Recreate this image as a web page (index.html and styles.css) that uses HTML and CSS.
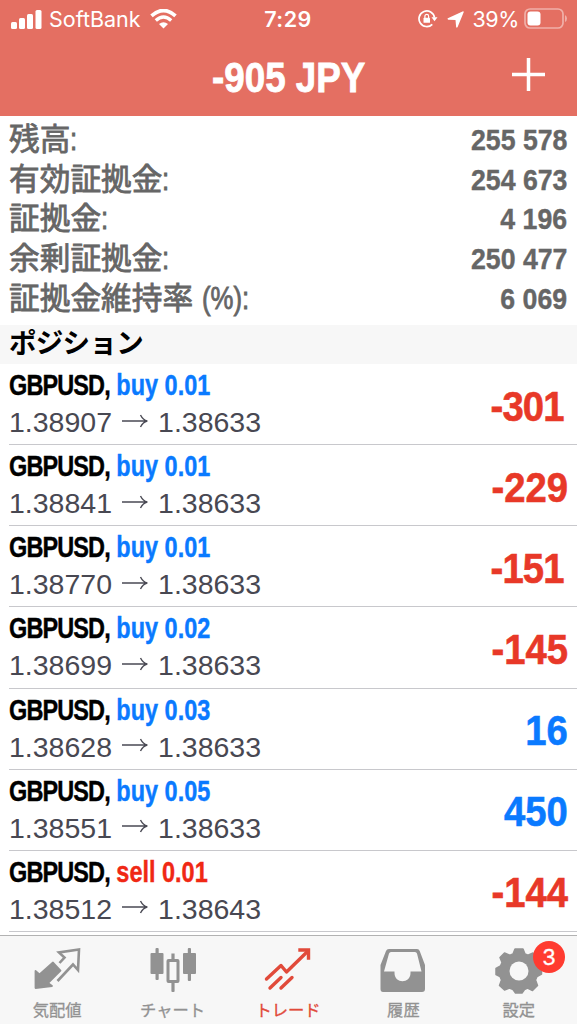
FILE: index.html
```html
<!DOCTYPE html>
<html lang="ja">
<head>
    <meta charset="utf-8">
    <meta name="viewport" content="width=device-width, initial-scale=1.0">
    <title>トレード</title>
    <link rel="stylesheet" href="styles.css">
</head>
<body>
    <header>
        <div class="status-bar">
            <div class="status-left">
                <svg class="signal" width="31" height="19" viewBox="0 0 31 19" fill="#fff">
                    <rect x="0" y="12" width="6" height="7" rx="1.5"/>
                    <rect x="8" y="8" width="6" height="11" rx="1.5"/>
                    <rect x="16" y="4" width="6" height="15" rx="1.5"/>
                    <rect x="24.5" y="0" width="6" height="19" rx="1.5"/>
                </svg>
                <span class="carrier">SoftBank</span>
                <svg class="wifi" width="27" height="20" viewBox="0 0 27 20">
                    <path d="M1.5 6.8Q13.5-3.8 25.5 6.8" fill="none" stroke="#fff" stroke-width="3.7"/>
                    <path d="M5.8 11.4Q13.5 4.6 21.2 11.4" fill="none" stroke="#fff" stroke-width="3.4"/>
                    <path d="M9 15Q13.5 11.3 18 15L13.5 19.5Z" fill="#fff"/>
                </svg>
            </div>
            <span class="clock">7:29</span>
            <div class="status-right">
                <svg width="20" height="18" viewBox="0 0 20 18">
                    <path d="M14.3 14.3A7.8 7.8 0 1 1 16.5 7.5" fill="none" stroke="#fff" stroke-width="1.7"/>
                    <path d="M13.5 7.3H19.5L16.5 11.3Z" fill="#fff"/>
                    <rect x="5.5" y="7.8" width="6.5" height="5" rx=".6" fill="#fff"/>
                    <path d="M6.9 8V6.3a1.85 1.85 0 0 1 3.7 0V8" fill="none" stroke="#fff" stroke-width="1.2"/>
                </svg>
                <svg class="location" width="17" height="17" viewBox="0 0 16 16" fill="#fff">
                    <path d="M14.600 .4Q16 0 15.700 1.200L10 15Q9.200 16.500 8.600 15L8 8.500L1.200 8.200Q0 7.600 .8 6.800Z"/>
                </svg>
                <span class="percent">39%</span>
                <svg class="battery" width="44" height="22" viewBox="0 0 44 22">
                    <rect x="1" y="1" width="38" height="19" rx="5" fill="none" stroke="#fff" stroke-opacity=".45" stroke-width="1.7"/>
                    <rect x="3.5" y="3.5" width="13" height="14" rx="3" fill="#fff"/>
                    <path d="M41 7Q43 8 43 10.5T41 14Z" fill="#fff" fill-opacity=".45"/>
                </svg>
            </div>
        </div>
        <div class="title-bar">
            <h1>-905 JPY</h1>
            <svg class="add" width="33" height="33" viewBox="0 0 33 33">
                <path d="M16.5 0V33M0 16.5H33" stroke="#fff" stroke-width="3.5"/>
            </svg>
        </div>
    </header>

    <dl class="summary">
        <div><dt>残高<span>:</span></dt><dd>255 578</dd></div>
        <div><dt>有効証拠金<span>:</span></dt><dd>254 673</dd></div>
        <div><dt>証拠金<span>:</span></dt><dd>4 196</dd></div>
        <div><dt>余剰証拠金<span>:</span></dt><dd>250 477</dd></div>
        <div><dt>証拠金維持率 <span>(%):</span></dt><dd>6 069</dd></div>
    </dl>

    <h2>ポジション</h2>

    <!-- one arrow, reused in every row -->
    <svg class="defs">
        <symbol id="arrow" viewBox="0 0 26 14">
            <path d="M0 7H25M18.5 1Q21 6 25.3 7Q21 8 18.5 13" fill="none" stroke="#4a4a54" stroke-width="1.4"/>
        </symbol>
    </svg>

    <ul class="positions">
        <li>
            <div>
                <p class="symbol"><span>GBPUSD,</span> <b class="buy">buy 0.01</b></p>
                <p class="price">1.38907<svg><use href="#arrow"/></svg>1.38633</p>
            </div>
            <span class="profit loss one">-301</span>
        </li>
        <li>
            <div>
                <p class="symbol"><span>GBPUSD,</span> <b class="buy">buy 0.01</b></p>
                <p class="price">1.38841<svg><use href="#arrow"/></svg>1.38633</p>
            </div>
            <span class="profit loss">-229</span>
        </li>
        <li>
            <div>
                <p class="symbol"><span>GBPUSD,</span> <b class="buy">buy 0.01</b></p>
                <p class="price">1.38770<svg><use href="#arrow"/></svg>1.38633</p>
            </div>
            <span class="profit loss one">-151</span>
        </li>
        <li>
            <div>
                <p class="symbol"><span>GBPUSD,</span> <b class="buy">buy 0.02</b></p>
                <p class="price">1.38699<svg><use href="#arrow"/></svg>1.38633</p>
            </div>
            <span class="profit loss">-145</span>
        </li>
        <li>
            <div>
                <p class="symbol"><span>GBPUSD,</span> <b class="buy">buy 0.03</b></p>
                <p class="price">1.38628<svg><use href="#arrow"/></svg>1.38633</p>
            </div>
            <span class="profit gain">16</span>
        </li>
        <li>
            <div>
                <p class="symbol"><span>GBPUSD,</span> <b class="buy">buy 0.05</b></p>
                <p class="price">1.38551<svg><use href="#arrow"/></svg>1.38633</p>
            </div>
            <span class="profit gain">450</span>
        </li>
        <li>
            <div>
                <p class="symbol"><span>GBPUSD,</span> <b class="sell">sell 0.01</b></p>
                <p class="price">1.38512<svg><use href="#arrow"/></svg>1.38643</p>
            </div>
            <span class="profit loss">-144</span>
        </li>
    </ul>

    <nav>
        <a>
            <svg width="48" height="48" viewBox="0 0 48 48">
                <path d="M20 14.500L27.500 22.500L15 35L19 38L2.500 40V23L6.500 26.500Z" fill="#929292" stroke="#929292" stroke-width="1.800" stroke-linejoin="round"/>
                <path d="M26.500 15L31.500 9.500L26 4.500L46 1.500L45 22L40 16.500L24.500 33" fill="none" stroke="#929292" stroke-width="2.600"/>
            </svg>
            <span>気配値</span>
        </a>
        <a>
            <svg width="48" height="48" viewBox="0 0 48 48" fill="#929292">
                <rect x="1.5" y="5" width="13" height="21" rx="1"/>
                <rect x="6.5" y="0" width="3.2" height="32" rx="1"/>
                <rect x="34" y="5" width="13" height="21" rx="1"/>
                <rect x="38.8" y="0" width="3.2" height="33" rx="1"/>
                <rect x="19" y="12.5" width="10" height="21" rx=".5" fill="none" stroke="#929292" stroke-width="3"/>
                <rect x="22.4" y="5.5" width="3.2" height="7"/>
                <rect x="22.4" y="34" width="3.2" height="10" rx="1"/>
            </svg>
            <span>チャート</span>
        </a>
        <a class="active">
            <svg width="48" height="48" viewBox="0 0 48 48" fill="none" stroke="#e14a3a" stroke-width="3.4">
                <path d="M2.5 31L17 17.5L22.5 24L44 3" stroke-linejoin="round" stroke-linecap="round"/>
                <path d="M36 2H44.5V10" stroke-linecap="square"/>
                <path d="M6 40L17 29.5M17 40L28 29.5" stroke-linecap="round"/>
            </svg>
            <span>トレード</span>
        </a>
        <a>
            <svg width="48" height="48" viewBox="0 0 48 48">
                <path d="M10 1H38Q40 1 40.7 3L46 17V41Q46 44 43 44H4Q1.5 44 1.5 41V17L7 3Q7.7 1 10 1ZM12 4Q10.5 4 10 5.5L5 23.5H15.5V25C15.5 36 31.5 36 31.5 25V23.5H42.5L38 5.5Q37.5 4 36 4Z" fill="#929292" fill-rule="evenodd"/>
            </svg>
            <span>履歴</span>
        </a>
        <a>
            <svg width="48" height="48" viewBox="0 0 48 48">
                <path d="M20 1H28L30 6L33 7.3L38 5L43 9.5L40.5 15L42 18.5L46.5 20V26L42 28.5L40.5 32L42.5 37.5L37.5 42.5L32.5 40L29.5 41.5L27 45H20.5L18 41.5L14.5 40L9.5 42L4.5 37.5L6.5 32L5 28.5L1 26.5V20.5L5.5 18L7 14.5L5 9.5L9.5 5L15 7.3L18 6Z" fill="#929292" stroke="#929292" stroke-width="1.5" stroke-linejoin="round"/>
                <circle cx="24" cy="23" r="9.5" fill="#f7f7f7"/>
            </svg>
            <span>設定</span>
            <b class="badge">3</b>
        </a>
    </nav>
</body>
</html>
```
FILE: styles.css
```css
/* Page setup */
* {
    box-sizing: border-box;
}

body {
    margin: 0;
    height: 1024px;
    overflow: hidden;
    background: #fff;
    color: #000;
    font-family: "Liberation Sans", "Noto Sans CJK JP", sans-serif;
    display: flex;
    flex-direction: column;
}

svg {
    display: block;
    flex: none;
}

.defs {
    position: absolute;
    width: 0;
    height: 0;
}

/* Red header */
header {
    height: 116px;
    flex: none;
    background: #e46f62;
    color: #fff;
}

.status-bar {
    height: 38px;
    display: grid;
    grid-template-columns: 1fr auto 1fr;
    align-items: center;
    padding: 0 9px 0 11px;
    font-family: Inter, sans-serif;
    font-size: 21.5px;
}

.status-left,
.status-right {
    display: flex;
    align-items: center;
}

.status-right {
    justify-content: flex-end;
}

.signal {
    margin-right: 7px;
}

.wifi {
    margin-left: 9px;
}

.clock {
    font-weight: 600;
    letter-spacing: 0.5px;
    margin-right: 3px;
}

.location {
    margin-left: 9px;
}

.percent {
    margin: 0 5px 0 8px;
    letter-spacing: -0.4px;
}

.title-bar {
    height: 78px;
    display: grid;
    grid-template-columns: 1fr auto 1fr;
    align-items: center;
}

/* Bold text is squeezed to a condensed look */
h1 {
    grid-column: 2;
    margin: 0;
    font-size: 43px;
    line-height: 77px;
    transform: scaleX(0.855);
    -webkit-text-stroke: 0.8px;
}

.add {
    justify-self: end;
    margin: 0 32px 6px 0;
}

/* Account summary */
.summary {
    margin: 0;
    padding: 4px 10px 0 9px;
    height: 209px;
    flex: none;
    color: #666;
}

.summary div {
    display: flex;
    justify-content: space-between;
    height: 39.7px;
    line-height: 39.7px;
}

dt {
    font-size: 30.7px;
    white-space: nowrap;
    -webkit-text-stroke: 0.8px #666;
}

dt span {
    display: inline-block;
    transform: scaleX(0.84);
    transform-origin: left;
}

dd {
    margin: 0;
    font-size: 30px;
    font-weight: bold;
    transform: scaleX(0.89);
    transform-origin: right;
    -webkit-text-stroke: 0.4px;
}

h2 {
    margin: 0;
    height: 39px;
    flex: none;
    padding-left: 9px;
    background: #f7f7f7;
    font: bold 27.5px/38px "Liberation Sans", "Noto Sans CJK JP", sans-serif;
    letter-spacing: -0.7px;
}

/* Open positions */
.positions {
    list-style: none;
    margin: 0;
    padding: 0 0 0 9px;
    flex: 1;
}

.positions li {
    height: 81.15px;
    padding: 0 9px 0 0;
    border-bottom: 1px solid #c8c8cc;
    display: flex;
    justify-content: space-between;
    align-items: center;
}

.positions p {
    margin: 0;
}

.symbol {
    font-size: 29px;
    font-weight: bold;
    line-height: 37px;
    transform: scaleX(0.81);
    transform-origin: left;
    -webkit-text-stroke: 0.4px;
}

.symbol span {
    letter-spacing: -1.1px;
}

.price {
    display: flex;
    align-items: center;
    font-size: 28.5px;
    line-height: 37px;
    color: #484852;
}

.price svg {
    width: 26px;
    height: 14px;
    margin: 0 10px 4px;
}

.buy,
.gain {
    color: #0a7aff;
}

.sell {
    color: #f02814;
}

.loss {
    color: #e83828;
}

.profit {
    font-size: 43px;
    font-weight: bold;
    padding-top: 4px;
    transform: scaleX(0.89);
    transform-origin: right;
    -webkit-text-stroke: 0.6px;
}

/* a trailing 1 leaves a small gap on its right */
.one {
    letter-spacing: -1px;
    padding-right: 5px;
}

/* Bottom tabs */
nav {
    height: 89px;
    flex: none;
    display: grid;
    grid-template-columns: repeat(5, 1fr);
    background: #f7f7f7;
    border-top: 1px solid #b2b2b2;
    font-size: 16.3px;
    color: #929292;
    -webkit-text-stroke: 0.3px;
}

nav a {
    position: relative;
    display: flex;
    flex-direction: column;
    align-items: center;
    padding: 12px 1px 0 0;
}

nav a span {
    line-height: 28px;
}

nav .active {
    color: #e14a3a;
}

.badge {
    position: absolute;
    top: 5px;
    right: 12px;
    width: 32px;
    height: 32px;
    border-radius: 50%;
    background: #ff3b30;
    color: #fff;
    font: 22px/32px Inter, sans-serif;
    text-align: center;
}
```
